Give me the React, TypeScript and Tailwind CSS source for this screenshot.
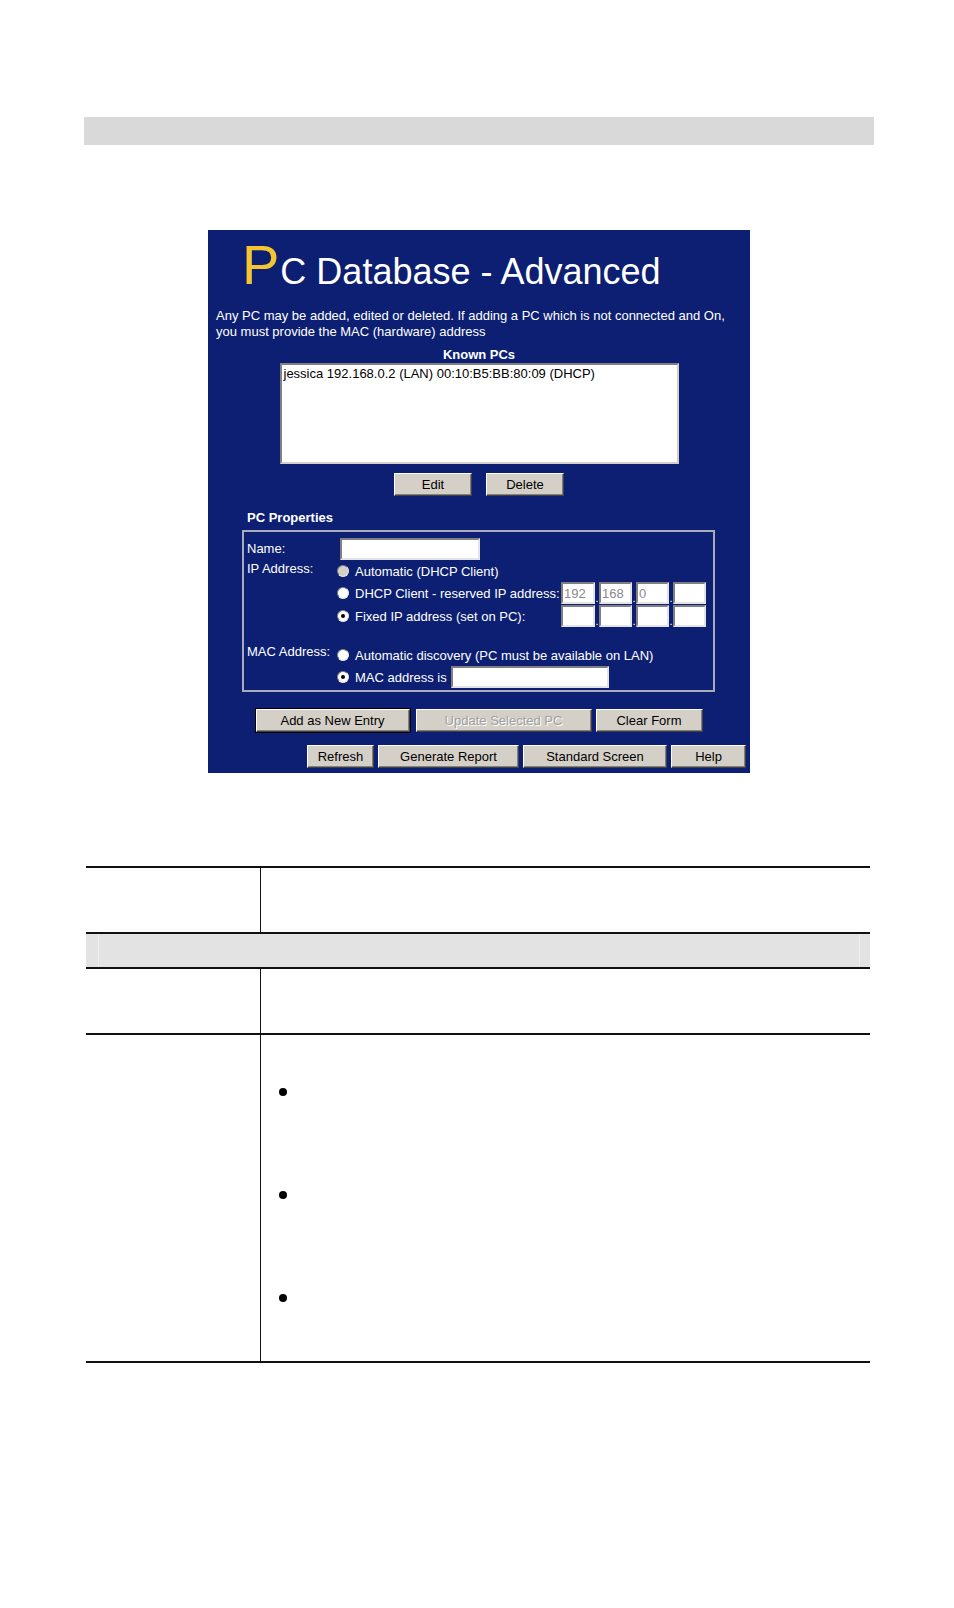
import React from 'react'

const font = "font-['Liberation_Sans',Arial,sans-serif]"

const Btn = ({ label, w, disabled, main }: { label: string; w: string; disabled?: boolean; main?: boolean }) => (
  <div
    className={`${w} h-[23px] flex items-center justify-center bg-[#d4d0c8] border border-t-white border-l-white border-b-[#404040] border-r-[#404040] shadow-[inset_-1px_-1px_0_#808080] text-[13px] leading-none ${
      disabled ? 'text-[#a0a0a0] [text-shadow:1px_1px_0_#ffffff]' : 'text-black'
    } ${main ? 'ring-1 ring-black' : ''}`}
  >
    {label}
  </div>
)

const Radio = ({ checked, grey }: { checked?: boolean; grey?: boolean }) => (
  <span
    className={`w-[12px] h-[12px] rounded-full flex items-center justify-center border border-t-[#808080] border-l-[#808080] border-b-[#e8e8e8] border-r-[#e8e8e8] shrink-0 ${
      grey ? 'bg-[#d4d0c8]' : 'bg-white'
    }`}
  >
    {checked && <span className="w-[4px] h-[4px] rounded-full bg-black" />}
  </span>
)

const Field = ({ w, value }: { w: string; value?: string }) => (
  <div
    className={`${w} h-[22px] bg-white border-2 border-t-[#808080] border-l-[#808080] border-b-[#e4e4e4] border-r-[#e4e4e4] text-[13px] leading-none text-[#8a8a8a] flex items-center pl-[1px]`}
  >
    {value}
  </div>
)

const IpGroup = ({ values }: { values: string[] }) => (
  <div className="ml-auto mr-[7px] flex items-end">
    {values.map((v, i) => (
      <React.Fragment key={i}>
        {i > 0 && <span className="w-[4px] text-[11px] leading-[12px] text-white text-center">.</span>}
        <Field w={i === 0 ? 'w-[34px]' : 'w-[33px]'} value={v} />
      </React.Fragment>
    ))}
  </div>
)

const PcDatabase = () => {
  return (
    <div className={`w-[542px] h-[543px] ml-[208px] mt-[85px] bg-[#0d1f72] text-white ${font} flex flex-col`}>
      <div className="pl-[34px] pt-[4px] h-[72px] flex items-baseline">
        <span className="text-[56px] leading-[62px] text-[#f5c531]">P</span>
        <span className="text-[36px] leading-none ml-[1px]">C Database - Advanced</span>
      </div>

      <p className="pl-[8px] pt-[6px] text-[13px] leading-[16px]">
        Any PC may be added, edited or deleted. If adding a PC which is not connected and On,
        <br />
        you must provide the MAC (hardware) address
      </p>

      <div className="mt-[7px] text-center font-bold text-[13px] leading-[16px]">Known PCs</div>

      <div className="mx-auto w-[399px] h-[101px] bg-white border-2 border-t-[#808080] border-l-[#808080] border-b-[#d4d0c8] border-r-[#d4d0c8] text-black text-[13px] leading-[16px] pl-[2px] pt-[1px]">
        jessica 192.168.0.2 (LAN) 00:10:B5:BB:80:09 (DHCP)
      </div>

      <div className="mt-[9px] flex justify-center gap-[14px]">
        <Btn label="Edit" w="w-[78px]" />
        <Btn label="Delete" w="w-[78px]" />
      </div>

      <div className="pl-[39px] mt-[14px] font-bold text-[13px] leading-[16px]">PC Properties</div>

      <div className="ml-[34px] mt-[4px] w-[473px] h-[162px] border-2 border-[#a9abbd] pl-[3px] pt-[5px] text-[13px] leading-none flex flex-col">
        <div className="h-[23px] flex items-center">
          <span className="w-[93px]">Name:</span>
          <Field w="w-[140px]" />
        </div>

        <div className="h-[22px] flex items-center">
          <span className="w-[90px] self-start pt-[2px]">IP Address:</span>
          <Radio grey />
          <span className="ml-[6px]">Automatic (DHCP Client)</span>
        </div>
        <div className="h-[22px] flex items-center pl-[90px]">
          <Radio />
          <span className="ml-[6px]">DHCP Client - reserved IP address:</span>
          <IpGroup values={['192', '168', '0', '']} />
        </div>
        <div className="h-[24px] flex items-center pl-[90px]">
          <Radio checked />
          <span className="ml-[6px]">Fixed IP address (set on PC):</span>
          <IpGroup values={['', '', '', '']} />
        </div>

        <div className="mt-[16px] h-[22px] flex items-center">
          <span className="w-[90px] self-start pt-[1px]">MAC Address:</span>
          <Radio />
          <span className="ml-[6px]">Automatic discovery (PC must be available on LAN)</span>
        </div>
        <div className="h-[22px] flex items-center pl-[90px]">
          <Radio checked />
          <span className="ml-[6px]">MAC address is</span>
          <div className="ml-[4px]">
            <Field w="w-[158px]" />
          </div>
        </div>
      </div>

      <div className="mt-[17px] flex justify-center">
        <Btn label="Add as New Entry" w="w-[154px]" main />
        <div className="w-[6px]" />
        <Btn label="Update Selected PC" w="w-[176px]" disabled />
        <div className="w-[4px]" />
        <Btn label="Clear Form" w="w-[107px]" />
      </div>

      <div className="mt-[13px] flex justify-end pr-[4px] gap-[4px]">
        <Btn label="Refresh" w="w-[67px]" />
        <Btn label="Generate Report" w="w-[141px]" />
        <Btn label="Standard Screen" w="w-[144px]" />
        <Btn label="Help" w="w-[75px]" />
      </div>
    </div>
  )
}

const Bullet = () => <span className="block w-[8px] h-[8px] rounded-full bg-black" />

const App = () => {
  return (
    <div className="w-[954px] min-h-[1608px] bg-white">
      <div className="pt-[117px]">
        <div className="ml-[84px] w-[790px] h-[28px] bg-[#d9d9d9]" />
      </div>

      <PcDatabase />

      <div className="ml-[86px] mt-[93px] w-[784px] border-t-2 border-[#111]">
        <div className="flex h-[66px] border-b-2 border-[#111]">
          <div className="w-[175px] border-r-[1.5px] border-[#111]" />
          <div className="flex-1" />
        </div>
        <div className="h-[35px] bg-[#e3e3e3] flex border-b-2 border-[#111]">
          <div className="w-[12px]" />
          <div className="w-[1px] bg-[#efefef]" />
          <div className="flex-1" />
          <div className="w-[1px] bg-[#efefef]" />
          <div className="w-[10px]" />
        </div>
        <div className="flex h-[66px] border-b-2 border-[#111]">
          <div className="w-[175px] border-r-[1.5px] border-[#111]" />
          <div className="flex-1" />
        </div>
        <div className="flex h-[328px] border-b-2 border-[#111]">
          <div className="w-[175px] border-r-[1.5px] border-[#111]" />
          <div className="flex-1 pl-[18px] pt-[53px] flex flex-col gap-[95px]">
            <Bullet />
            <Bullet />
            <Bullet />
          </div>
        </div>
      </div>
    </div>
  )
}

export default App
